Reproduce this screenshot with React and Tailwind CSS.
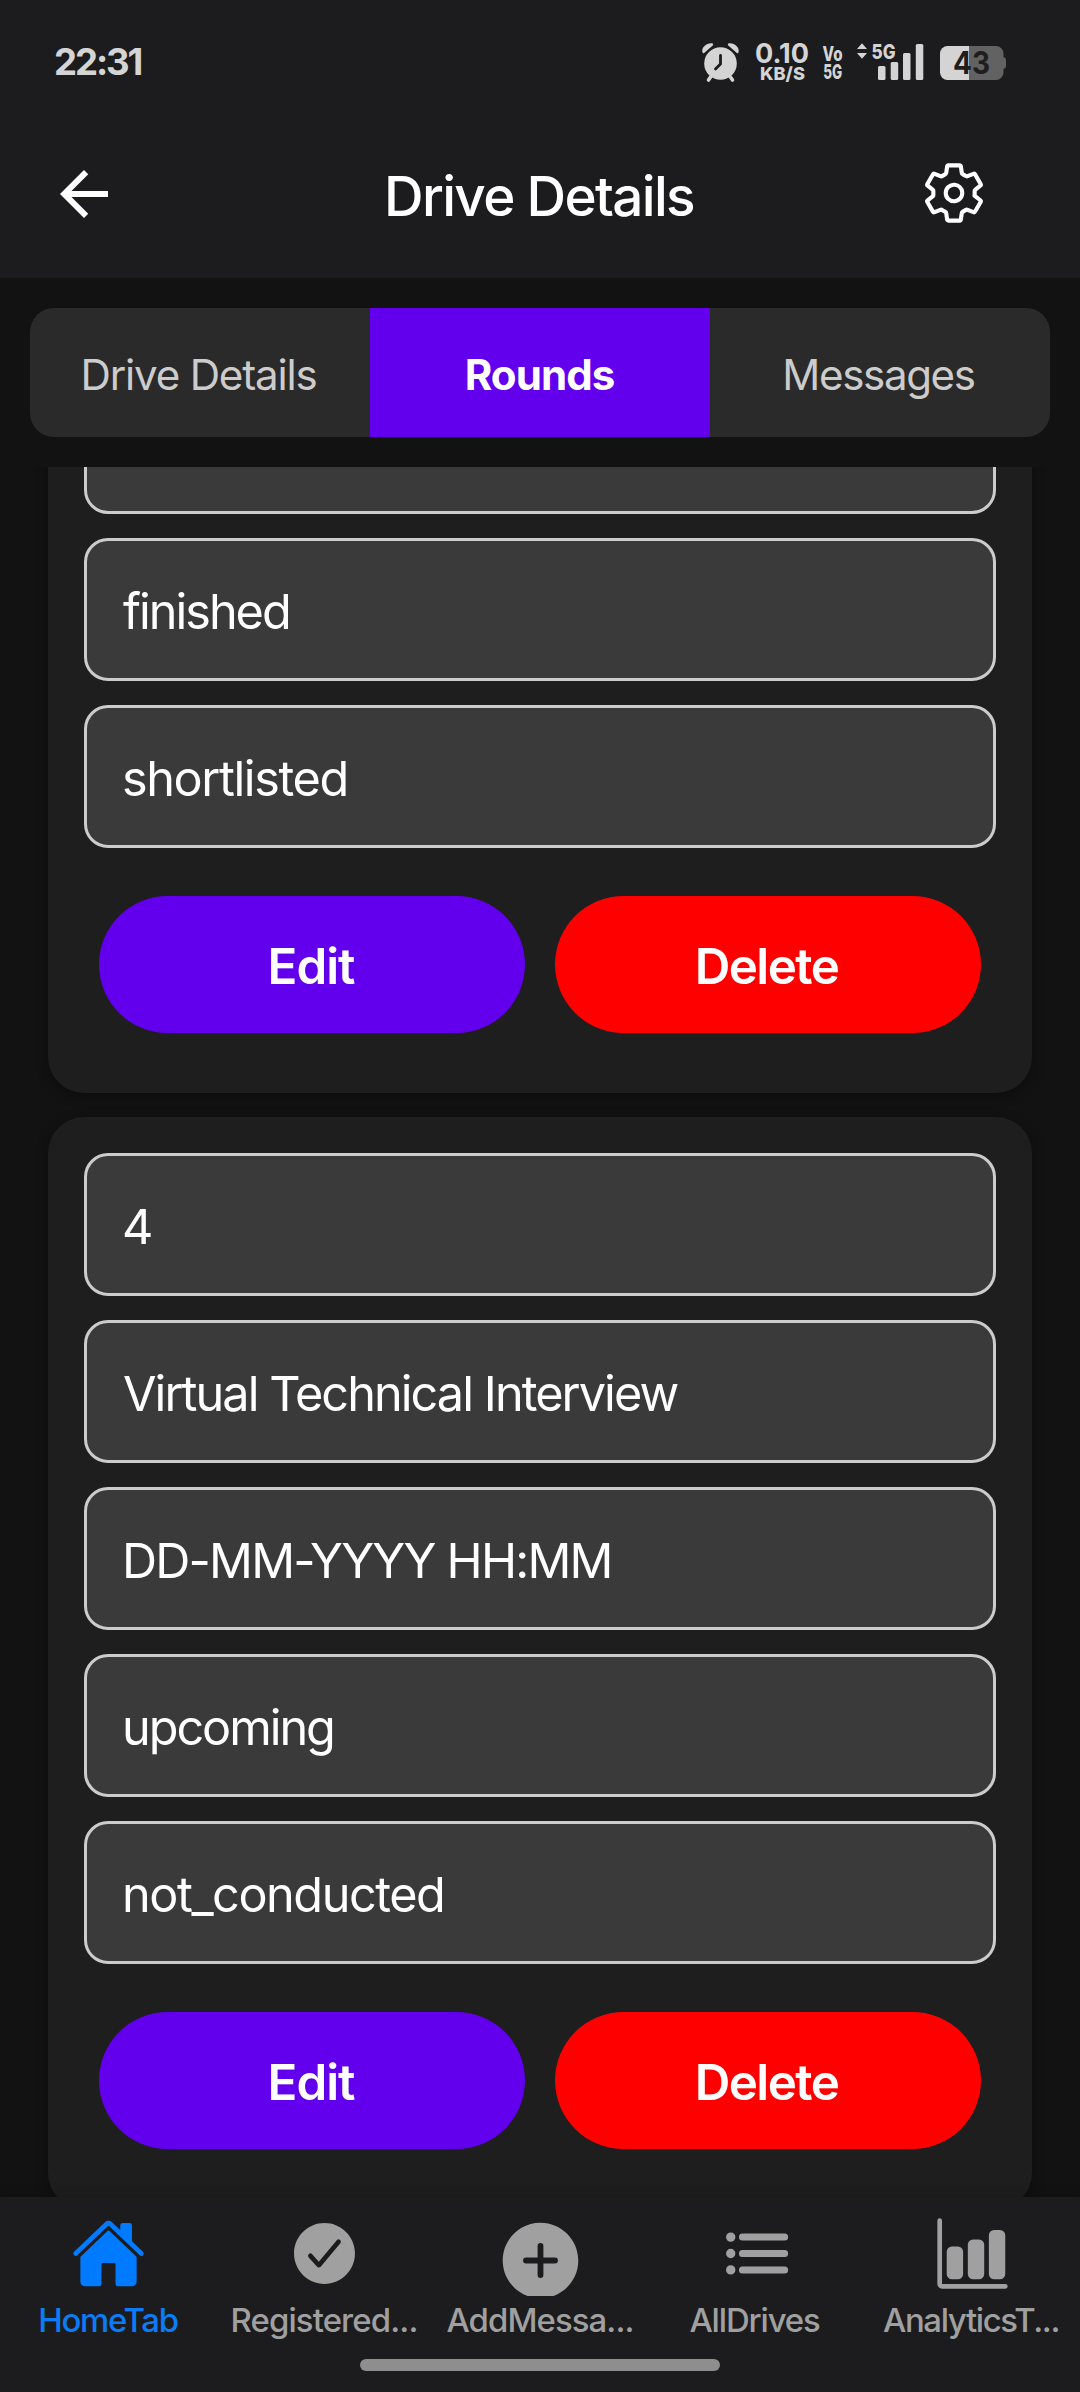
import React from 'react';
import {
  IoAddCircle,
  IoBarChart,
  IoCheckmarkCircle,
  IoHome,
  IoList,
  IoSettingsOutline,
} from 'react-icons/io5';
import { MdArrowBack } from 'react-icons/md';

function StatusIcons() {
  return (
    <svg width="310" height="52" viewBox="700 36 310 52" fill="#d4d4d4" fontFamily="Inter, sans-serif">
      {/* alarm clock */}
      <circle cx="720.5" cy="63.5" r="16.3" />
      <path d="M702.5 52.5c-1.5-5 4-10 10-9.2l.8 1.6L703.6 53.4zM738.5 52.5c1.5-5-4-10-10-9.2l-.8 1.6 9.7 8.5z" />
      <path d="M712 75l-3.5 5M729 75l3.5 5" stroke="#d4d4d4" strokeWidth="3.6" strokeLinecap="round" />
      <path d="M720.5 55.5v8.5l-5 5" fill="none" stroke="#1c1c1e" strokeWidth="2.8" strokeLinecap="round" strokeLinejoin="round" />
      {/* network speed */}
      <text x="755" y="63.3" fontSize="27.5" fontWeight="700" textLength="54" lengthAdjust="spacingAndGlyphs">0.10</text>
      <text x="760" y="79.5" fontSize="18" fontWeight="800" textLength="45" lengthAdjust="spacingAndGlyphs">KB/S</text>
      {/* voice over 5G */}
      <text x="822.5" y="61" fontSize="19.5" fontWeight="800" textLength="20" lengthAdjust="spacingAndGlyphs">Vo</text>
      <text x="823.3" y="79" fontSize="20.5" fontWeight="800" textLength="19" lengthAdjust="spacingAndGlyphs">5G</text>
      {/* signal */}
      <path d="M862 43.2l5 5.8h-10zM862 58.8l5-5.8h-10z" />
      <text x="871.5" y="58.8" fontSize="20.5" fontWeight="800" textLength="24" lengthAdjust="spacingAndGlyphs">5G</text>
      <rect x="878" y="66" width="7.5" height="14" rx="1.5" />
      <rect x="890.7" y="62" width="7.5" height="18" rx="1.5" />
      <rect x="903" y="53" width="7.5" height="27" rx="1.5" />
      <rect x="915.8" y="44" width="7.5" height="36" rx="1.5" />
      {/* battery */}
      <path d="M969 46h27a7.5 7.5 0 0 1 7.5 7.5V57q2.5 .5 2.5 3v6q0 2.5-2.5 3v3.5a7.5 7.5 0 0 1-7.5 7.5h-27z" fill="#626262" />
      <path d="M969 46h-21.5a7.5 7.5 0 0 0-7.5 7.5v19a7.5 7.5 0 0 0 7.5 7.5H969z" />
      <text x="953" y="74.3" fontSize="31" fontWeight="700" fill="#1e1e1f" textLength="37" lengthAdjust="spacingAndGlyphs">43</text>
    </svg>
  );
}

function Header() {
  return (
    <header className="h-[278px] shrink-0 bg-[#1c1c1e]">
      <div className="flex h-[124px] items-center justify-between pl-[54px] pr-[70px]">
        <span className="text-[36.6px] leading-none font-bold tracking-[-2.1px] text-[#d4d4d4]">22:31</span>
        <StatusIcons />
      </div>
      <div className="grid h-[140px] grid-cols-[1fr_auto_1fr] items-center text-white">
        <MdArrowBack className="ml-12 size-[72px]" />
        <h1 className="pt-1 pr-0.5 text-[54.8px] leading-none font-medium tracking-[-1.66px]">Drive Details</h1>
        <IoSettingsOutline className="mr-[93px] mb-0.5 size-[66px] justify-self-end" />
      </div>
    </header>
  );
}

function Tabs() {
  return (
    <div className="mx-[30px] mt-[30px] grid h-[129px] shrink-0 grid-cols-3 overflow-hidden rounded-[24px] bg-[#2a2a2a] text-[42.1px] leading-none text-[#cccccc]">
      <div className="flex items-center justify-center pt-[5px] pr-[3px] tracking-[-1.18px]">Drive Details</div>
      <div className="flex items-center justify-center bg-[#6200ee] pt-[5px] pr-px font-bold tracking-[-0.98px] text-white">Rounds</div>
      <div className="flex items-center justify-center pt-[5px] pr-[3px] tracking-[-1.36px]">Messages</div>
    </div>
  );
}

const upper = [
  { text: '', className: '' },
  { text: 'finished', className: 'tracking-[-2px] pl-px' },
  { text: 'shortlisted', className: 'tracking-[-1.4px]' },
];

const lower = [
  { text: '4', className: '' },
  { text: 'Virtual Technical Interview', className: 'tracking-[-1.93px] pl-px' },
  { text: 'DD-MM-YYYY HH:MM', className: 'tracking-[-1.8px]' },
  { text: 'upcoming', className: 'tracking-[-2.05px]' },
  { text: 'not_conducted', className: 'tracking-[-1.45px]' },
];

function RoundCard({ fields }) {
  return (
    <section className="rounded-[36px] bg-[#1e1e1e] px-9 pt-9 pb-[60px] shadow-[0_3px_12px_rgba(0,0,0,0.35)]">
      <div className="flex flex-col gap-6">
        {fields.map((f) => (
          <div
            key={f.text}
            className="flex h-[143px] items-center rounded-[24px] border-3 border-[#cccccc] bg-[#3a3a3a] px-[35px] pt-1.5 text-[48.6px] leading-none whitespace-nowrap text-white"
          >
            <span className={f.className}>{f.text}</span>
          </div>
        ))}
      </div>
      <div className="mx-[15px] mt-12 grid grid-cols-2 gap-[30px] text-[49.3px] leading-none font-semibold text-white">
        <button className="h-[137px] rounded-[75px] bg-[#6200ee] pt-[5px] pr-[2px] tracking-[-1px]">Edit</button>
        <button className="h-[137px] rounded-[75px] bg-[#ff0000] pt-[5px] pr-[3px] tracking-[-1.54px]">Delete</button>
      </div>
    </section>
  );
}

const navItems = [
  { label: 'HomeTab', Icon: IoHome, size: 'size-[75px]', text: 'tracking-[-1.26px] text-[#0a7cf5]', color: 'text-[#007aff]' },
  { label: 'Registered...', Icon: IoCheckmarkCircle, size: 'size-[75px]', text: 'tracking-[-0.87px]', color: '' },
  { label: 'AddMessa...', Icon: IoAddCircle, size: 'size-[93px] mt-[13px]', text: 'tracking-[-0.91px]', color: '' },
  { label: 'AllDrives', Icon: IoList, size: 'size-[75px]', text: 'tracking-[-1.14px] pr-[3px]', color: '' },
  { label: 'AnalyticsT...', Icon: IoBarChart, size: 'size-[75px]', text: 'tracking-[-1.36px] pr-[2px]', color: '' },
];

function BottomNav() {
  return (
    <nav className="relative flex h-[195px] shrink-0 flex-col items-center bg-[#1c1c1e] shadow-[0_-2px_12px_rgba(0,0,0,0.15)]">
      <div className="grid w-full grid-cols-5 text-[#a0a0a0]">
        {navItems.map(({ label, Icon, size, text, color }) => (
          <div key={label} className="flex flex-col items-center">
            <div className={`flex h-[99px] w-full items-center justify-center overflow-hidden pt-[14px] ${color}`}>
              <Icon className={`shrink-0 ${size}`} />
            </div>
            <span className={`mt-[7px] text-[32.9px] leading-[34px] font-medium whitespace-nowrap ${text}`}>{label}</span>
          </div>
        ))}
      </div>
      <div className="mt-[22px] h-3 w-[360px] rounded-full bg-[#8e8e8e]" />
    </nav>
  );
}

export default function App() {
  return (
    <div className="flex h-[2392px] w-[1080px] flex-col overflow-hidden bg-[#121212] font-['Inter',sans-serif]">
      <Header />
      <Tabs />
      <main className="mt-[30px] min-h-0 flex-1 overflow-hidden px-12">
        <div className="-mt-[132px] flex flex-col gap-6">
          <RoundCard fields={upper} />
          <RoundCard fields={lower} />
        </div>
      </main>
      <BottomNav />
    </div>
  );
}
